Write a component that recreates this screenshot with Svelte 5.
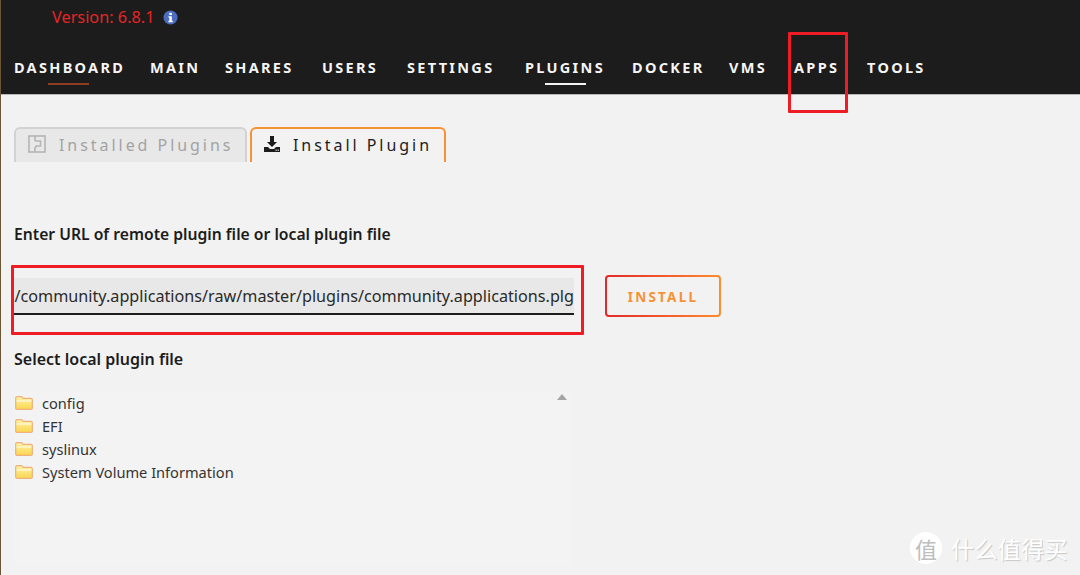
<script>
  const nav = [
    { label: 'DASHBOARD', pitch: 136 },
    { label: 'MAIN', pitch: 75 },
    { label: 'SHARES', pitch: 97 },
    { label: 'USERS', pitch: 85 },
    { label: 'SETTINGS', pitch: 118 },
    { label: 'PLUGINS', pitch: 107 },
    { label: 'DOCKER', pitch: 97 },
    { label: 'VMS', pitch: 65 },
    { label: 'APPS', pitch: 73 },
    { label: 'TOOLS', pitch: 60 }
  ];
  const files = ['config','EFI','syslinux','System Volume Information'];
</script>

<div class="page">
  <header>
    <div class="version">
      <span>Version: 6.8.1</span>
      <svg class="info" viewBox="0 0 16 16" width="15" height="15">
        <circle cx="8" cy="8" r="7.5" fill="#4a6dbf"/>
        <rect x="6.7" y="3" width="2.7" height="2.4" fill="#fff"/>
        <path d="M5.8 6.6h3.6v4.9h1v1.5H5.8v-1.5h1V8.1h-1z" fill="#fff"/>
      </svg>
    </div>
    <nav>
      {#each nav as item, i}
        <div class="nav-item" style="width: {item.pitch}px">
          <span class="nav-text" class:first={i === 0} class:current={item.label === 'PLUGINS'}>{item.label}</span>
        </div>
      {/each}
    </nav>
  </header>

  <main>
    <div class="tabs">
      <div class="tab off">
        <svg viewBox="0 0 18 18" width="18" height="18" fill="none" stroke="#b4b4b4" stroke-width="1.6">
          <rect x="1" y="1" width="16" height="16"/>
          <path d="M7 1v5M7 12v5M7 6h5.5v5H8v1.5"/>
        </svg>
        <span>Installed Plugins</span>
      </div>
      <div class="tab on">
        <svg viewBox="0 0 18 18" width="18" height="18">
          <path d="M7 1h4v6h3l-5 5-5-5h3z" fill="#1c1c1c"/>
          <path d="M1 12h4l2 2h4l2-2h4v5H1z" fill="#1c1c1c"/>
          <rect x="12.5" y="14.6" width="1.2" height="1.2" fill="#f2f2f2"/>
          <rect x="14.6" y="14.6" width="1.2" height="1.2" fill="#f2f2f2"/>
        </svg>
        <span>Install Plugin</span>
      </div>
    </div>

    <div class="label first-label">Enter URL of remote plugin file or local plugin file</div>

    <div class="row">
      <div class="url"><span>/community.applications/raw/master/plugins/community.applications.plg</span></div>
      <div class="install">INSTALL</div>
    </div>

    <div class="label second-label">Select local plugin file</div>

    <div class="tree">
      <svg width="0" height="0" class="defs">
        <defs>
          <linearGradient id="fg" x1="0" y1="0" x2="0" y2="1">
            <stop offset="0" stop-color="#fdf3a8"/>
            <stop offset="1" stop-color="#fbd64e"/>
          </linearGradient>
        </defs>
      </svg>
      {#each files as f}
        <div class="file">
          <svg viewBox="0 0 18 14" width="18" height="14">
            <path d="M.7 12.2V2Q.7.7 2 .7h4.6l1.6 1.7H16q1.3 0 1.3 1.3v8.5q0 1.1-1.3 1.1H2Q.7 13.3.7 12.2z" fill="url(#fg)" stroke="#eeb07c" stroke-width="1.2"/>
            <path d="M1.6 5h14.8" stroke="#fffbe2" stroke-width="1.2"/>
          </svg>
          <span>{f}</span>
        </div>
      {/each}
      <div class="arrow"></div>
    </div>
  </main>

  <div class="mark box-apps"></div>
  <div class="mark box-url"></div>

  <div class="watermark">
    <span class="seal">值</span>
    <span class="wm-text">什么值得买</span>
  </div>
</div>

<style>
  :global(body) { margin: 0; background: #f2f2f2; }
  .page {
    position: relative;
    width: 1080px;
    height: 575px;
    overflow: hidden;
    background: #f2f2f2;
    font-family: "Noto Sans", "Open Sans", sans-serif;
    color: #1c1c1c;
    border-left: 1px solid #6b5535;
    box-sizing: border-box;
  }
  header {
    height: 95px;
    box-sizing: border-box;
    background: #1c1c1c;
    border-bottom: 1px solid #b9b9b9;
  }
  .version {
    display: flex;
    align-items: center;
    gap: 8px;
    height: 34px;
    padding-left: 51px;
    color: #e42525;
    font-size: 16.3px;
  }
  nav {
    display: flex;
    padding: 22px 0 0 13px;
  }
  .nav-item {
    flex: none;
    color: #f5f5f5;
    font-size: 14.5px;
    font-weight: 700;
    letter-spacing: 2.3px;
    line-height: 22px;
    white-space: nowrap;
  }
  .nav-text { position: relative; display: inline-block; }
  .nav-text.first::after, .nav-text.current::after {
    content: "";
    position: absolute;
    bottom: -7px;
    width: 41px;
    height: 2px;
    background: #f2f2f2;
  }
  .nav-text.first::after { left: 34px; background: #8e3d22; }
  .nav-text.current::after { left: 20px; }
  main { padding: 32px 0 0 13px; }
  .tabs { display: flex; gap: 3px; height: 35px; }
  .tab {
    display: flex;
    align-items: center;
    box-sizing: border-box;
    height: 35px;
    border: 2px solid;
    border-bottom: 0;
    border-radius: 6px 6px 0 0;
    font-size: 16px;
    white-space: nowrap;
  }
  .tab svg { margin-top: -2px; }
  .tab.off {
    width: 233px;
    padding: 0 0 2px 12px;
    gap: 13px;
    background: #e8e8e8;
    border-color: #d2d2d2;
    color: #a3a3a3;
    letter-spacing: 2.95px;
  }
  .tab.on {
    width: 196px;
    padding: 0 0 2px 11px;
    gap: 12px;
    background: #f2f2f2;
    border-color: #f79233;
    color: #1c1c1c;
    letter-spacing: 2.95px;
  }
  .label { font-size: 15.7px; font-weight: 600; line-height: 20px; }
  .first-label { margin-top: 62px; }
  .row { display: flex; align-items: flex-start; margin-top: 31px; }
  .url {
    width: 560px;
    height: 37px;
    margin-top: 3px;
    box-sizing: border-box;
    background: #e8e8e8;
    border-bottom: 2px solid #1c1c1c;
    padding-top: 7px;
    font-size: 16.2px;
    line-height: 22px;
    overflow: hidden;
    white-space: nowrap;
    color: #2a2a2a;
    display: flex;
    justify-content: flex-end;
  }
  .install {
    margin-left: 31px;
    width: 116px;
    height: 42px;
    box-sizing: border-box;
    display: flex;
    align-items: center;
    justify-content: center;
    padding-top: 1px;
    border: 2px solid transparent;
    border-radius: 4px;
    background:
      linear-gradient(#f2f2f2, #f2f2f2) padding-box,
      linear-gradient(90deg, #e22828, #ff8c2f) border-box;
    color: #f79233;
    font-size: 13.5px;
    font-weight: 700;
    letter-spacing: 2.2px;
  }
  .second-label { margin-top: 32px; font-size: 16px; }
  .tree {
    position: relative;
    width: 558px;
    margin-top: 22px;
    height: 175px;
    background: #f3f3f3;
  }
  .defs { position: absolute; }
  .file {
    display: flex;
    align-items: center;
    gap: 9px;
    height: 23.2px;
    padding-left: 1px;
    font-size: 14.6px;
    color: #333;
  }
  .arrow {
    position: absolute;
    top: 3px;
    right: 5px;
    width: 0;
    height: 0;
    border-left: 5px solid transparent;
    border-right: 5px solid transparent;
    border-bottom: 6px solid #a5a5a5;
  }
  .mark {
    position: absolute;
    box-sizing: border-box;
    border: 3px solid #ee1c25;
    border-radius: 1px;
  }
  .box-apps { left: 787px; top: 32px; width: 60px; height: 81px; }
  .box-url { left: 10px; top: 265px; width: 573px; height: 70px; }
  .watermark {
    position: absolute;
    left: 909px;
    top: 532px;
    display: flex;
    align-items: center;
    gap: 9px;
    color: #fff;
    font-family: "Noto Sans CJK SC", sans-serif;
    text-shadow: 1px 1px 1px #c6c6c6;
  }
  .seal {
    width: 32px;
    height: 32px;
    border-radius: 50%;
    background: #fff;
    color: #bdbdbd;
    text-shadow: none;
    display: flex;
    align-items: center;
    justify-content: center;
    font-size: 22px;
  }
  .wm-text { font-size: 23px; letter-spacing: 0.4px; line-height: 32px; }
</style>
